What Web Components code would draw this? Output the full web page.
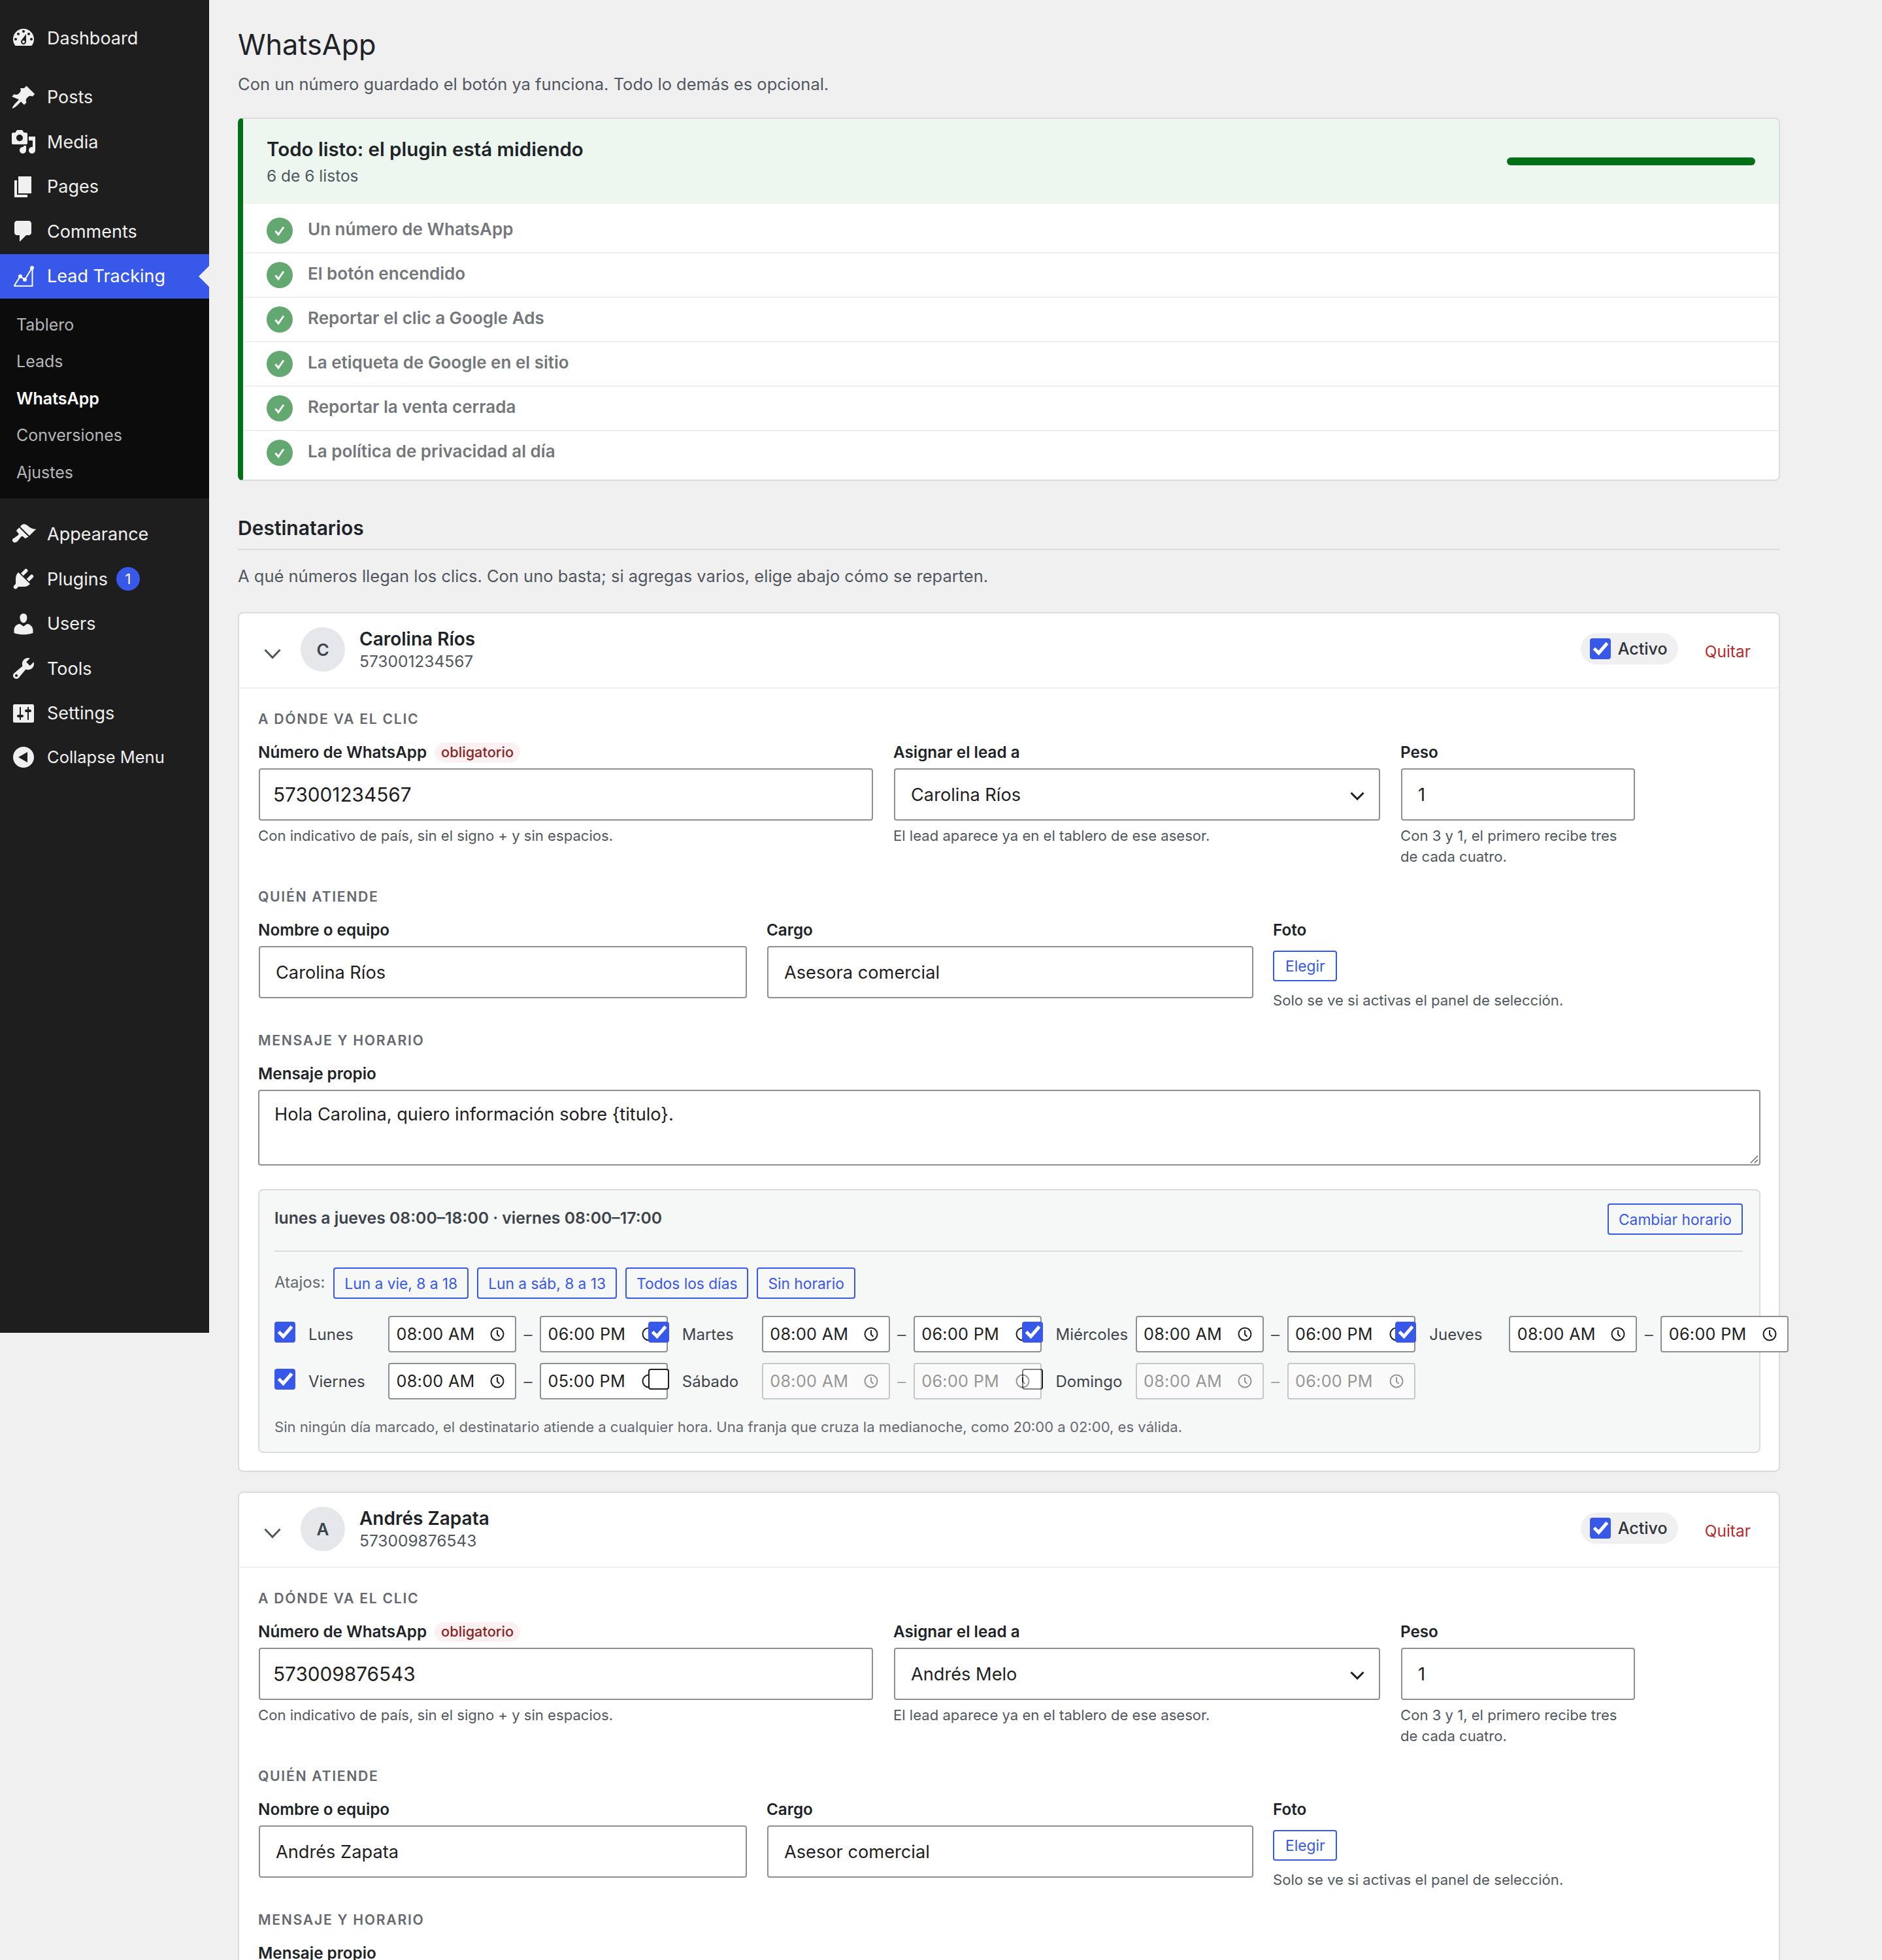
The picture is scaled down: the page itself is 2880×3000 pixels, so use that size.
<!DOCTYPE html>
<html lang="es">
<head>
<meta charset="utf-8">
<title>WhatsApp</title>
<style>
html,body{margin:0;padding:0;height:3000px;overflow:hidden;background:#f0f0f0;font-family:Inter,"Liberation Sans",sans-serif;color:#1e1e1e}
body{display:flex;align-items:flex-start}
</style>
</head>
<body>
<wp-sidebar></wp-sidebar>
<wa-page>
  <wa-setup></wa-setup>
  <wa-section-head title="Destinatarios" desc="A qué números llegan los clics. Con uno basta; si agregas varios, elige abajo cómo se reparten."></wa-section-head>
  <wa-recipient name="Carolina Ríos" initial="C" phone="573001234567" lead="Carolina Ríos" role="Asesora comercial" msg="Hola Carolina, quiero información sobre {titulo}."></wa-recipient>
  <wa-recipient partial name="Andrés Zapata" initial="A" phone="573009876543" lead="Andrés Melo" role="Asesor comercial"></wa-recipient>
</wa-page>
<script>
const def=(name,render)=>customElements.define(name,class extends HTMLElement{
  constructor(){super();this.attachShadow({mode:'open'})}
  connectedCallback(){this.shadowRoot.innerHTML=render(this)}
});
const ICONS={
dashboard:'M3.76 16h12.48c1.1-1.37 1.76-3.11 1.76-5 0-4.42-3.58-8-8-8s-8 3.58-8 8c0 1.89.66 3.63 1.76 5zM10 4c.55 0 1 .45 1 1s-.45 1-1 1-1-.45-1-1 .45-1 1-1zM6 6c.55 0 1 .45 1 1s-.45 1-1 1-1-.45-1-1 .45-1 1-1zm8 0c.55 0 1 .45 1 1s-.45 1-1 1-1-.45-1-1 .45-1 1-1zm-5.37 5.55L12 7v6c0 1.1-.9 2-2 2s-2-.9-2-2c0-.57.24-1.08.63-1.45zM4 10c.55 0 1 .45 1 1s-.45 1-1 1-1-.45-1-1 .45-1 1-1zm12 0c.55 0 1 .45 1 1s-.45 1-1 1-1-.45-1-1 .45-1 1-1zm-5 3c0-.55-.45-1-1-1s-1 .45-1 1 .45 1 1 1 1-.45 1-1z',
posts:'M10.44 3.02l1.82-1.82 6.36 6.35-1.83 1.82c-1.05-.68-2.48-.57-3.41.36l-.75.75c-.92.93-1.04 2.35-.35 3.41l-1.83 1.82-2.41-2.41-2.8 2.79c-.42.42-3.38 2.71-3.8 2.29s1.86-3.39 2.28-3.81l2.79-2.79L1.1 9.36l1.83-1.82c1.05.69 2.48.57 3.4-.36l.75-.75c.93-.92 1.05-2.35.36-3.41z',
media:'M13 11V4c0-.55-.45-1-1-1h-1.67L9 1H5L3.67 3H2c-.55 0-1 .45-1 1v7c0 .55.45 1 1 1h10c.55 0 1-.45 1-1zM7 4.5c1.38 0 2.5 1.12 2.5 2.5S8.38 9.5 7 9.5 4.5 8.38 4.5 7 5.62 4.5 7 4.5zM14 6h5v10.5c0 1.38-1.12 2.5-2.5 2.5S14 17.88 14 16.5s1.12-2.5 2.5-2.5c.17 0 .34.02.5.05V9h-3V6zm-4 8.05V13h2v3.5c0 1.38-1.12 2.5-2.5 2.5S7 17.88 7 16.5 8.12 14 9.5 14c.17 0 .34.02.5.05z',
pages:'M6 15V2h10v13H6zm-1 1h8v2H3V5h2v11z',
comments:'M5 2h9c1.1 0 2 .9 2 2v7c0 1.1-.9 2-2 2h-2l-5 5v-5H5c-1.1 0-2-.9-2-2V4c0-1.1.9-2 2-2z',
appearance:'M14.48 11.06L7.41 3.99l1.5-1.5c.5-.56 2.3-.47 3.51.32 1.21.8 1.43 1.28 2.91 2.1 1.18.64 2.45 1.26 4.45.85zm-.71.71L6.7 4.7 4.93 6.47c-.39.39-.39 1.02 0 1.41l1.06 1.06c.39.39.39 1.03 0 1.42-.6.6-1.43 1.11-2.21 1.69-.35.26-.7.53-1.01.84C1.43 13.23.91 14.52 2 15.61c1.1 1.09 2.38.57 3.72-.77.31-.31.58-.66.84-1.01.58-.78 1.09-1.61 1.69-2.21.39-.39 1.02-.39 1.41 0l1.06 1.06c.39.39 1.02.39 1.41 0z',
plugins:'M13.11 4.36L9.87 7.6 8 5.73l3.24-3.24c.35-.34 1.05-.2 1.56.32.52.51.66 1.21.31 1.55zm-8 1.77l.91-1.12 9.01 9.01-1.19.84c-.71.71-2.63 1.16-3.82 1.16H6.14L4.9 17.26c-.59.59-1.54.59-2.12 0-.59-.58-.59-1.53 0-2.12l1.24-1.24v-3.88c0-1.13.4-3.19 1.09-3.89zm7.26 3.97l3.24-3.24c.34-.35 1.04-.21 1.55.31.52.51.66 1.21.31 1.55l-3.24 3.25z',
users:'M10 9.25c-2.27 0-2.73-3.44-2.73-3.44C7 4.02 7.82 2 9.97 2c2.16 0 2.98 2.02 2.71 3.81 0 0-.41 3.44-2.68 3.44zm0 2.57L12.72 10c2.39 0 4.52 2.33 4.52 4.53v2.49s-3.65 1.13-7.24 1.13c-3.65 0-7.24-1.13-7.24-1.13v-2.49c0-2.25 1.94-4.48 4.47-4.48z',
tools:'M16.68 9.77c-1.34 1.34-3.3 1.67-4.95.99l-5.41 6.52c-.99.99-2.59.99-3.58 0s-.99-2.59 0-3.57l6.52-5.42c-.68-1.65-.35-3.61.99-4.95 1.28-1.28 3.12-1.62 4.72-1.06l-2.89 2.89 2.82 2.82 2.86-2.87c.53 1.58.18 3.39-1.08 4.65zM3.81 16.21c.4.39 1.04.39 1.43 0 .4-.4.4-1.04 0-1.43-.39-.4-1.03-.4-1.43 0-.39.39-.39 1.03 0 1.43z',
settings:'M18 16V4c0-.55-.45-1-1-1H3c-.55 0-1 .45-1 1v12c0 .55.45 1 1 1h14c.55 0 1-.45 1-1zM8 11h1c.55 0 1 .45 1 1s-.45 1-1 1H8v1.5c0 .28-.22.5-.5.5s-.5-.22-.5-.5V13H6c-.55 0-1-.45-1-1s.45-1 1-1h1V5.5c0-.28.22-.5.5-.5s.5.22.5.5V11zm5-2h-1c-.55 0-1-.45-1-1s.45-1 1-1h1V5.5c0-.28.22-.5.5-.5s.5.22.5.5V7h1c.55 0 1 .45 1 1s-.45 1-1 1h-1v5.5c0 .28-.22.5-.5.5s-.5-.22-.5-.5V9z',
collapse:'M18 10c0-4.42-3.58-8-8-8s-8 3.58-8 8 3.58 8 8 8 8-3.58 8-8zm-5-4v8l-7-4z'
};
const iconSvg=n=>n==='lead'
 ?`<svg viewBox="0 0 40 40" width="40" height="40"><path d="M5.500 34.700H33.500V7M5.500 34.700L15 20 22 25 33 7" fill="none" stroke="#fff" stroke-width="2"/><circle cx="15" cy="20" r="3" fill="#fff"/><circle cx="22" cy="25" r="3" fill="#fff"/><circle cx="33" cy="7" r="3" fill="#fff"/></svg>`
 :`<svg viewBox="0 0 20 20" width="40" height="40"><path fill="#f0f0f1" fill-rule="evenodd" d="${ICONS[n]}"/></svg>`;

def('wp-menu-item',e=>`<style>
:host{display:flex;align-items:center;height:68.5px;font-size:27px;color:#f0f0f1;position:relative;box-sizing:border-box}
:host([current]){background:#3858e9;color:#fff}
:host([current])::after{content:"";position:absolute;right:0;top:50%;margin-top:-16px;border:16px solid transparent;border-left:0;border-right-color:#f0f0f0}
:host([small]){font-size:25.500px;margin-top:-1.500px}
svg{flex:none;margin:0 16px}
.b{margin-left:13px;width:36px;height:36px;border-radius:50%;background:#3858e9;color:#fff;font-size:22px;display:flex;align-items:center;justify-content:center}
</style>${iconSvg(e.getAttribute('icon'))}<slot></slot>${e.hasAttribute('badge')?`<span class="b">${e.getAttribute('badge')}</span>`:''}`);

def('wp-sub-item',e=>`<style>
:host{display:flex;align-items:center;height:56.5px;padding-left:25px;font-size:25px;color:#b5b6b7}
:host([current]){color:#fff;font-weight:600}
</style><slot></slot>`);

def('wp-sidebar',()=>`<style>
:host{display:block;flex:none;width:320px;height:2040px;box-sizing:border-box;padding-top:24px;background:#1e1e1e;font-family:Inter,"Liberation Sans",sans-serif}
.g1{margin-top:22px}
.sub{background:#0c0c0c;padding:11.500px 0 11.500px}
.g2{margin-top:21px}
</style>
<wp-menu-item icon="dashboard">Dashboard</wp-menu-item>
<div class="g1">
<wp-menu-item icon="posts">Posts</wp-menu-item>
<wp-menu-item icon="media">Media</wp-menu-item>
<wp-menu-item icon="pages">Pages</wp-menu-item>
<wp-menu-item icon="comments">Comments</wp-menu-item>
<wp-menu-item icon="lead" current>Lead Tracking</wp-menu-item>
</div>
<div class="sub">
<wp-sub-item>Tablero</wp-sub-item>
<wp-sub-item>Leads</wp-sub-item>
<wp-sub-item current>WhatsApp</wp-sub-item>
<wp-sub-item>Conversiones</wp-sub-item>
<wp-sub-item>Ajustes</wp-sub-item>
</div>
<div class="g2">
<wp-menu-item icon="appearance">Appearance</wp-menu-item>
<wp-menu-item icon="plugins" badge="1">Plugins</wp-menu-item>
<wp-menu-item icon="users">Users</wp-menu-item>
<wp-menu-item icon="tools">Tools</wp-menu-item>
<wp-menu-item icon="settings">Settings</wp-menu-item>
<wp-menu-item icon="collapse" small>Collapse Menu</wp-menu-item>
</div>`);

def('wa-page',()=>`<style>
:host{display:block;flex:none;width:2360px;margin-left:44px;font-family:Inter,"Liberation Sans",sans-serif}
h1{margin:38px 0 0;font-size:43.200px;line-height:60px;font-weight:400;color:#1d2327}
p{margin:11px 0 31px;font-size:25.500px;line-height:40px;color:#50575e}
</style>
<h1>WhatsApp</h1>
<p>Con un número guardado el botón ya funciona. Todo lo demás es opcional.</p>
<slot></slot>`);

def('wa-check-row',()=>`<style>
:host{display:flex;align-items:center;gap:23px;height:66px;padding-left:36px;border-bottom:2px solid #f0f0f1;font-size:26px;font-weight:600;color:#73777c}
:host([last]){border-bottom:0}
svg{flex:none}
span{padding-bottom:6px}
</style><svg width="40" height="40" viewBox="0 0 40 40"><circle cx="20" cy="20" r="20" fill="#63a870"/><path d="M13.500 20.500l4.500 5.500 8-11.500" fill="none" stroke="#fff" stroke-width="3"/></svg><span><slot></slot></span>`);

def('wa-setup',()=>`<style>
:host{display:block;box-sizing:border-box;height:556px;background:#fff;border:2px solid #dcdcde;border-left:8px solid #007017;border-radius:8px;overflow:hidden}
header{display:flex;justify-content:space-between;align-items:center;height:130px;box-sizing:border-box;padding:0 36px;background:#edf7f0}
h2{margin:-2px 0 2px;font-size:29.500px;line-height:44px;font-weight:600;color:#1d2327}
small{display:block;font-size:24.500px;line-height:35px;color:#50575e}
.bar{width:380px;height:12px;border-radius:6px;background:#007017}
ul{margin:0;padding:8px 0 0;list-style:none}
</style>
<header><div><h2>Todo listo: el plugin está midiendo</h2><small>6 de 6 listos</small></div><div class="bar"></div></header>
<ul>
<li><wa-check-row>Un número de WhatsApp</wa-check-row></li>
<li><wa-check-row>El botón encendido</wa-check-row></li>
<li><wa-check-row>Reportar el clic a Google Ads</wa-check-row></li>
<li><wa-check-row>La etiqueta de Google en el sitio</wa-check-row></li>
<li><wa-check-row>Reportar la venta cerrada</wa-check-row></li>
<li><wa-check-row last>La política de privacidad al día</wa-check-row></li>
</ul>`);

def('wa-section-head',e=>`<style>
:host{display:block}
h2{margin:50px 0 0;padding-bottom:10px;border-bottom:2px solid #dcdcde;font-size:30px;line-height:44px;font-weight:600;color:#1d2327}
p{margin:20px 0 35px;font-size:25.500px;line-height:40px;color:#50575e}
</style><h2>${e.getAttribute('title')}</h2><p>${e.getAttribute('desc')}</p>`);

def('wa-box',e=>`<style>
:host{display:flex;align-items:center;box-sizing:border-box;height:80px;margin:0 1px;padding:0 24px;background:#fff;border:2px solid #8c8f94;border-radius:4px;font-size:27.200px;color:#1e1e1e;position:relative}
:host([tight]){padding:0 20px;font-size:29.750px}
svg{position:absolute;right:22px;top:34px}
</style><slot></slot>${e.hasAttribute('caret')?'<svg width="22" height="13" viewBox="0 0 22 13"><path d="M1.500 1.500L11 11l9.500-9.500" fill="none" stroke="#1e1e1e" stroke-width="3"/></svg>':''}`);

def('wa-field',e=>`<style>
:host{display:block;min-width:0}
.l{display:flex;align-items:center;box-sizing:border-box;height:32px;padding-bottom:1px;margin-bottom:8px;font-size:24.250px;font-weight:600;color:#1d2327}
.req{margin-left:12px;padding:0 10px;height:30px;line-height:29px;border-radius:15px;background:#fcf0f1;color:#8a2424;font-size:21.750px;font-weight:500}
.h{margin-top:7px;font-size:22.100px;line-height:32px;color:#50575e}
</style><div class="l">${e.getAttribute('label')}${e.hasAttribute('req')?'<span class="req">obligatorio</span>':''}</div><slot></slot>${e.hasAttribute('help')?`<div class="h">${e.getAttribute('help')}</div>`:''}`);

def('wa-sec',()=>`<style>
:host{display:block;height:30px;line-height:30px;font-size:21.200px;font-weight:600;letter-spacing:1.700px;text-transform:uppercase;color:#646970}
</style><slot></slot>`);

def('wa-btn',()=>`<style>
:host{display:inline-flex;align-items:center;box-sizing:border-box;height:48px;padding:0 15px;border:2px solid #3858e9;border-radius:4px;font-size:22.750px;color:#3858e9;white-space:nowrap;background:transparent}
</style><slot></slot>`);

def('wa-checkbox',e=>`<style>
:host{display:block;flex:none;width:32px;height:32px;box-sizing:border-box;border-radius:4px;background:#fff;border:2px solid #1e1e1e}
:host([checked]){background:#3858e9;border-color:#3858e9}
svg{display:block;margin:-2px}
</style>${e.hasAttribute('checked')?'<svg width="32" height="32" viewBox="0 0 32 32"><path d="M6.500 15.500l7 7L26.500 7.500" fill="none" stroke="#fff" stroke-width="5"/></svg>':''}`);

def('wa-time',e=>`<style>
:host{display:flex;flex:none;align-items:center;justify-content:space-between;box-sizing:border-box;width:196px;height:56px;padding:0 16px 0 10.500px;background:#fff;border:2px solid #8c8f94;border-radius:4px;font-size:25.200px;letter-spacing:.3px;color:#1e1e1e;white-space:nowrap}
:host([off]){opacity:.45}
svg{flex:none}
</style><slot></slot><svg width="22" height="22" viewBox="0 0 22 22" fill="none" stroke="#1e1e1e" stroke-width="2"><circle cx="11" cy="11" r="9.500"/><path d="M11 5v6.500l3.500 3.500"/></svg>`);

def('wa-day',e=>{const off=e.hasAttribute('off');const a=off?' off':'';return `<style>
:host{display:flex;align-items:center;min-width:0;width:555.750px;height:56px}
wa-checkbox{margin-right:20px;margin-top:-6px}
.n{flex:none;width:122px;font-size:24px;color:#3c434a;white-space:nowrap}
.d{flex:none;width:36px;text-align:center;font-size:26px;color:#50575e}
:host([off]) .d{color:#a7aaad}
</style><wa-checkbox ${off?'':'checked'}></wa-checkbox><span class="n">${e.getAttribute('name')}</span><wa-time${a}>${e.getAttribute('from')}</wa-time><span class="d">–</span><wa-time${a}>${e.getAttribute('to')}</wa-time>`});

def('wa-schedule',()=>`<style>
:host{display:block;box-sizing:border-box;margin-top:36px;padding:20px 25px 22px 23px;background:#f6f7f7;border:2px solid #dcdcde;border-radius:8px}
.top{display:flex;justify-content:space-between;align-items:flex-start;padding-bottom:24px;border-bottom:2px solid #dcdcde}
.sum{font-size:24.750px;line-height:44px;font-weight:600;color:#3c434a}
.at{display:flex;align-items:center;gap:13px;margin-top:24px;font-size:24px;color:#646970}
.at span{padding-bottom:4px}
.days{display:grid;grid-template-columns:repeat(4,555.750px);gap:16px;margin-top:26px}
.h{margin-top:26px;font-size:22.100px;line-height:32px;color:#646970}
</style>
<div class="top"><div class="sum">lunes a jueves 08:00–18:00 · viernes 08:00–17:00</div><wa-btn>Cambiar horario</wa-btn></div>
<div class="at"><span>Atajos:</span><wa-btn>Lun a vie, 8 a 18</wa-btn><wa-btn>Lun a sáb, 8 a 13</wa-btn><wa-btn>Todos los días</wa-btn><wa-btn>Sin horario</wa-btn></div>
<div class="days">
<wa-day name="Lunes" from="08:00 AM" to="06:00 PM"></wa-day>
<wa-day name="Martes" from="08:00 AM" to="06:00 PM"></wa-day>
<wa-day name="Miércoles" from="08:00 AM" to="06:00 PM"></wa-day>
<wa-day name="Jueves" from="08:00 AM" to="06:00 PM"></wa-day>
<wa-day name="Viernes" from="08:00 AM" to="05:00 PM"></wa-day>
<wa-day name="Sábado" off from="08:00 AM" to="06:00 PM"></wa-day>
<wa-day name="Domingo" off from="08:00 AM" to="06:00 PM"></wa-day>
</div>
<div class="h">Sin ningún día marcado, el destinatario atiende a cualquier hora. Una franja que cruza la medianoche, como 20:00 a 02:00, es válida.</div>`);

def('wa-recipient',e=>{const a=n=>e.getAttribute(n)||'';const partial=e.hasAttribute('partial');return `<style>
:host{display:block;box-sizing:border-box;margin-bottom:30px;background:#fff;border:2px solid #dcdcde;border-radius:8px;font-family:Inter,"Liberation Sans",sans-serif}
header{display:flex;align-items:flex-start;box-sizing:border-box;height:115px;padding:21px 43px 0 38px;border-bottom:2px solid #f0f0f1}
.chev{flex:none;margin:33px 30px 0 0}
.av{flex:none;width:68px;height:68px;border-radius:50%;background:#e5e7eb;color:#3c434a;font-size:26px;font-weight:600;display:flex;align-items:center;justify-content:center}
.who{margin-left:22px;flex:1;padding-top:1px}
.nm{font-size:28px;line-height:34px;font-weight:600;color:#1d2327}
.ph{font-size:24.500px;line-height:34px;color:#50575e}
.pill{display:flex;align-items:center;gap:11px;width:149px;height:48px;margin-top:9px;padding-left:14px;border-radius:24px;background:#f0f0f0;font-size:25px;font-weight:500;color:#2c3338;box-sizing:border-box}
.q{margin:13px 0 0 41px;line-height:48px;font-size:24.500px;color:#b32d2e}
main{padding:31px 28px 27px 29px}
.r{display:grid;margin-top:21px;align-items:start}
.r1{grid-template-columns:942px 746px 360px;column-gap:30px}
.r2{grid-template-columns:749px 746px 500px;column-gap:29px}
wa-sec.m{margin-top:30px}
.foto wa-btn{margin-top:7px;height:47px;padding:0 17px}
.fh{margin-top:13px;font-size:22.100px;line-height:32px;color:#50575e}
.ta{box-sizing:border-box;height:116px;padding:16px 23px;background:#fff;border:2px solid #8c8f94;border-radius:4px;font-size:27.200px;line-height:40px;color:#1e1e1e;position:relative}
.ta svg{position:absolute;right:1px;bottom:1px}
.row3{margin-top:21px}
</style>
<header>
<svg class="chev" width="26" height="16" viewBox="0 0 26 16"><path d="M1.500 1.500L13 13.500 24.500 1.500" fill="none" stroke="#50575e" stroke-width="3"/></svg>
<div class="av">${a('initial')}</div>
<div class="who"><div class="nm">${a('name')}</div><div class="ph">${a('phone')}</div></div>
<div class="pill"><wa-checkbox checked></wa-checkbox>Activo</div>
<div class="q">Quitar</div>
</header>
<main>
<wa-sec>A dónde va el clic</wa-sec>
<div class="r r1">
<wa-field label="Número de WhatsApp" req help="Con indicativo de país, sin el signo + y sin espacios."><wa-box tight>${a('phone')}</wa-box></wa-field>
<wa-field label="Asignar el lead a" help="El lead aparece ya en el tablero de ese asesor."><wa-box caret>${a('lead')}</wa-box></wa-field>
<wa-field label="Peso" help="Con 3 y 1, el primero recibe tres de cada cuatro."><wa-box>1</wa-box></wa-field>
</div>
<wa-sec class="m">Quién atiende</wa-sec>
<div class="r r2">
<wa-field label="Nombre o equipo"><wa-box>${a('name')}</wa-box></wa-field>
<wa-field label="Cargo"><wa-box>${a('role')}</wa-box></wa-field>
<wa-field class="foto" label="Foto"><wa-btn>Elegir</wa-btn><div class="fh">Solo se ve si activas el panel de selección.</div></wa-field>
</div>
<wa-sec class="m">Mensaje y horario</wa-sec>
<div class="row3">
<wa-field label="Mensaje propio">${partial?'':`<div class="ta">${a('msg')}<svg width="14" height="14" viewBox="0 0 14 14" stroke="#646970" stroke-width="1.500"><path d="M13 2L2 13M13 8l-5 5"/></svg></div>`}</wa-field>
</div>
${partial?'':'<wa-schedule></wa-schedule>'}
</main>`});
</script>
</body>
</html>
